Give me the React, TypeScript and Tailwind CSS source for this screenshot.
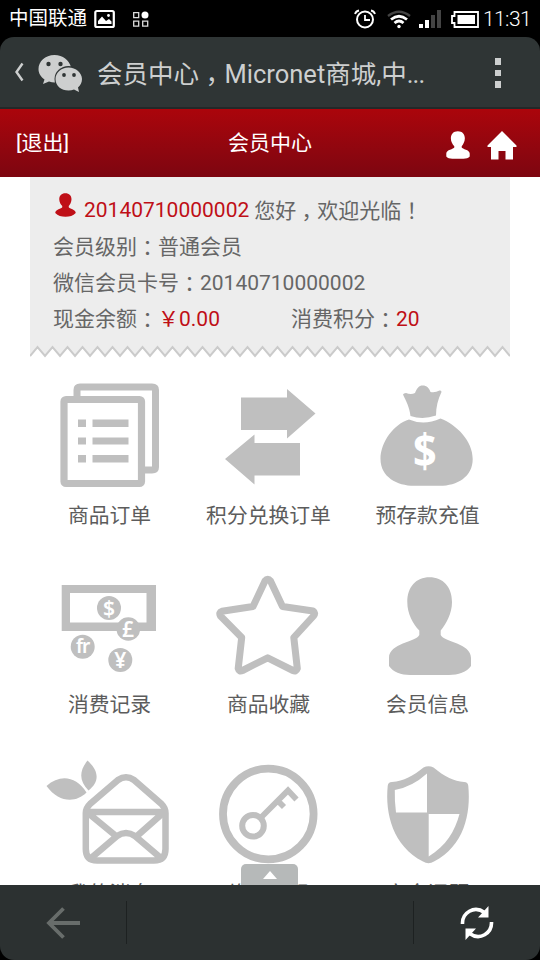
import type { ReactNode } from "react";

const menu: { label: string; viewBox: string; icon: ReactNode }[] = [
  {
    label: "商品订单",
    viewBox: "30 370 159 130",
    icon: (
      <>
        <path d="M77 397V390Q77 387 80 387H152Q155.500 387 155.500 390V467Q155.500 470 152 470H145" fill="none" stroke="#bfbfbf" strokeWidth="7" />
        <rect x="64" y="399.500" width="77.500" height="84" rx="2" fill="#fff" stroke="#bfbfbf" strokeWidth="7.200" />
        <path d="M78 419.500h8v7.500h-8zM78 437.500h8v7h-8zM78 455h8v7.500h-8zM92.500 419.500h36v7.500h-36zM92.500 437.500h36v7h-36zM92.500 455h36v7.500h-36z" />
      </>
    ),
  },
  {
    label: "积分兑换订单",
    viewBox: "189 370 159 130",
    icon: <path d="M241 397.500H287V389L315.500 413.500 287 438.500V430H241zM300 443V475.500H254.500V484.500L225 459 254.500 434.500V443z" />,
  },
  {
    label: "预存款充值",
    viewBox: "348 370 159 130",
    icon: (
      <>
        <path d="M410.500 416C409.500 407 406 401 403 394.500Q403.500 393 406 393Q411 395 415 393C417 388 419 385.500 422.500 385.500C427 385.500 429 388 430.500 392Q435 393 439.500 390.500Q441.500 390 441.500 392C438 399 436 407 436 415.500Q423 420 410.500 416z" />
        <path d="M409 419.500Q424 426 440.500 418.500C457 425 472.700 441 472.700 459C472.700 477 457 485.800 440 485.800H414C397 485.800 380.500 477 380.500 459C380.500 442 394 424 409 419.500z" />
        <text transform="translate(424.800 467.500) scale(0.900 1)" textAnchor="middle" fill="#fff" className="font-['Noto_Sans'] text-[46px] font-bold">$</text>
      </>
    ),
  },
  {
    label: "消费记录",
    viewBox: "30 559 159 130",
    icon: (
      <>
        <path fillRule="evenodd" d="M61.700 585H156V631H61.700zM70 593V622.500H146.500V593z" />
        <circle cx="109" cy="608" r="12" />
        <circle cx="128.300" cy="629" r="11.800" />
        <circle cx="82.700" cy="646.700" r="12" />
        <circle cx="120.300" cy="660" r="12" />
        <g fill="#fff" textAnchor="middle" className="font-['Noto_Sans'] text-[21px] font-semibold">
          <text x="109" y="615.500">$</text>
          <text x="128" y="636.500">£</text>
          <text x="82.700" y="653" className="text-[19px] tracking-[-1px]">fr</text>
          <text x="120.300" y="667.500">¥</text>
        </g>
      </>
    ),
  },
  {
    label: "商品收藏",
    viewBox: "189 559 159 130",
    icon: (
      <path
        d="M265 581Q267.700 577.500 270.500 581L282.500 606.500 313 611Q316 613 313.500 616L293.800 637.500 297.300 668.500Q296 672 293 670.500L267.700 657.800 242.500 670.500Q239 672 238.200 668.500L241.700 637.500 220.500 616Q218.500 612.500 222 611.300L253 606.500z"
        fill="none"
        stroke="#bfbfbf"
        strokeWidth="7"
        strokeLinejoin="round"
      />
    ),
  },
  {
    label: "会员信息",
    viewBox: "348 559 159 130",
    icon: (
      <path d="M429.500 577.300C443 577.300 452 587 452 602C452 614 446 624 440.700 630.500V635C444 642 471 643 471 658V666C467 672 458 675 449 675H410C401 675 393 672 389 666V658C389 643 416 642 419.300 635V630.500C413 624 407.300 614 407.300 602C407.300 587 416 577.300 429.500 577.300z" />
    ),
  },
  {
    label: "我的消息",
    viewBox: "30 748 159 130",
    icon: (
      <>
        <path d="M46.500 786C60 774 76 776 86.500 792.500C76 803 59 803 46.500 786zM87.500 760.500C100 772 99 782 88.500 790.500C79 781 79 771 87.500 760.500z" />
        <g fill="none" stroke="#bfbfbf" strokeWidth="6.500" strokeLinejoin="round">
          <path d="M85.800 813Q85.800 808 90 804L118 780Q126 774.500 134 780L161.500 804Q165.500 808 165.500 813V849Q165.500 860.500 154 860.500H97Q85.800 860.500 85.800 849z" />
          <path d="M86 812H165M88 813L116 836M163 813L137 836M90 859L117 836Q126 830 135 836L162 859" />
        </g>
      </>
    ),
  },
  {
    label: "修改密码",
    viewBox: "189 748 159 130",
    icon: (
      <g fill="none" stroke="#bfbfbf">
        <circle cx="268.300" cy="814" r="45.300" strokeWidth="7.800" />
        <circle cx="253" cy="825.700" r="10.800" strokeWidth="6" />
        <path d="M261 817.500L288 790.500 296.500 799.500M277.500 800.500L284 807" strokeWidth="5.800" />
      </g>
    ),
  },
  {
    label: "安全问题",
    viewBox: "348 748 159 130",
    icon: (
      <>
        <path d="M423.500 767.500Q428.500 765 433.500 767.500C445 777 454 781 464 782Q468 782 468.300 786C471 814 464 846 434 861.500Q428.500 865 423 861.500C393 846 385 814 387.700 786Q388 782 392 782C404 781 413 776 423.500 767.500z" />
        <path d="M427 773.500V812.500H396Q394.500 801 394.800 790Q412 787 427 773.500zM428.700 814H459.500C455 831 446 846 428.700 856.500z" fill="#fff" />
      </>
    ),
  },
];

// torn lower edge of the card, one tooth every 15px
const zigzag = Array.from({ length: 32 }, (_, i) => `L${7.5 + i * 15} 2 L${15 + i * 15} 11`).join(" ");

// half-width form padded on both sides, so the mark sits mid-cell
const Mark = ({ children }: { children: string }) => (
  <span className="px-[0.25em] font-['Noto_Sans_CJK_SC',sans-serif] [font-feature-settings:'halt']">{children}</span>
);

const StatusBar = () => (
  <div className="flex h-[37px] items-center bg-black px-[9px] text-white">
    <span className="pt-px text-[19.500px] leading-none">中国联通</span>
    <svg width="22" height="20" viewBox="0 0 22 20" className="ml-[7px]">
      <rect x="1.300" y="2" width="18.500" height="16" rx="1.500" fill="none" stroke="#fff" strokeWidth="2.200" />
      <path d="M4 15V12L8 7.500 12 12 15 10 17.500 12.500V15z" fill="#fff" />
      <circle cx="14.500" cy="6.500" r="1.400" fill="#fff" />
    </svg>
    <svg width="18" height="18" viewBox="0 0 18 18" className="ml-[16px]">
      <path d="M1.700 2.700h5v5h-5zM1.700 11.200h5v5h-5zM10.700 11.200h5v5h-5z" fill="none" stroke="#ddd" strokeWidth="1.300" />
      <circle cx="13" cy="5" r="3.500" fill="#fff" />
    </svg>
    <div className="ml-auto flex items-center pt-px">
      <svg width="22" height="20" viewBox="0 0 22 20" fill="none" stroke="#fff">
        <circle cx="11" cy="10.500" r="8" strokeWidth="2" />
        <path d="M11 6V11H16M1 5Q2 2 5 1.500M21 5Q20 2 17 1.500" strokeWidth="1.800" />
      </svg>
      <svg width="24" height="19" viewBox="0 0 24 19" fill="none" className="ml-[11px]">
        <path d="M1 6Q12 -2.500 23 6" stroke="#444" strokeWidth="2.300" />
        <path d="M4 9.500Q12 3 20 9.500M7.500 13Q12 9 16.500 13" stroke="#fff" strokeWidth="2.800" />
        <circle cx="12" cy="16.500" r="1.700" fill="#fff" />
      </svg>
      <svg width="22" height="18" viewBox="0 0 22 18" className="ml-[8px]">
        <path d="M0 14h4v4H0zM6 10h4v8H6z" fill="#fff" />
        <path d="M12 5h4v13h-4zM18 0h4v18h-4z" fill="#444" />
      </svg>
      <svg width="28" height="17" viewBox="0 0 28 17" className="ml-[10px]">
        <path d="M3.500 1H27V16H3.500V12H1V5H3.500z" fill="none" stroke="#fff" strokeWidth="1.800" />
        <path d="M6.500 4H24V13H6.500z" fill="#fff" />
      </svg>
      <span className="ml-[4px] pt-px font-['Roboto'] text-[21px] font-light leading-none tracking-[-0.600px]">11:31</span>
    </div>
  </div>
);

const TitleBar = () => (
  <div className="flex h-[72px] items-center rounded-t-[14px] border-b-2 border-[#232828] bg-[#2f3535] pl-[14px] text-[#cdcfcf]">
    <svg width="11" height="20" viewBox="0 0 11 20">
      <path d="M8.500 1.500L2.500 10 8.500 18.500" fill="none" stroke="#cdcfcf" strokeWidth="2.400" />
    </svg>
    <svg width="46" height="40" viewBox="37 53 46 40" className="ml-[12px] mt-0.5" fill="#cdcfcf">
      <path d="M54.500 55C45 55 38.500 61.500 38.500 69C38.500 73.500 41 77 44.500 79.500L43 84L49 81.500Q54 83 58 82Q62 70 71 67C69 60 63 55 54.500 55z" />
      <ellipse cx="68.500" cy="79" rx="14" ry="13" fill="#2f3535" />
      <path d="M68.500 67.500C61 67.500 55.500 73 55.500 79C55.500 86 61.500 90.500 68.500 90.500Q71.500 90.500 74 89.500L79 92L78 87.500C80.500 85.500 82 82.500 82 79C82 73 76 67.500 68.500 67.500z" />
      <g fill="#2f3535">
        <circle cx="48.500" cy="64" r="2.200" />
        <circle cx="60.500" cy="64" r="2.200" />
        <circle cx="64" cy="75" r="1.900" />
        <circle cx="74" cy="75" r="1.900" />
      </g>
    </svg>
    <h1 className="ml-[14px] whitespace-nowrap pt-[2px] text-[25.500px] leading-none">
      会员中心<Mark>，</Mark>Micronet商城,中<span className="tracking-[-0.900px]">...</span>
    </h1>
    <div className="ml-auto mr-[39px] flex flex-col gap-[5px] pt-0.5">
      <span className="size-[6.500px] bg-[#cdcfcf]" />
      <span className="size-[6.500px] bg-[#cdcfcf]" />
      <span className="size-[6.500px] bg-[#cdcfcf]" />
    </div>
  </div>
);

const MemberHeader = () => (
  <header className="grid h-[68px] grid-cols-3 items-center bg-linear-to-b from-[#ab050b] to-[#7d0610] text-[21px] text-white">
    <span className="pl-4 pt-0.5">[退出]</span>
    <span className="pt-0.5 text-center">会员中心</span>
    <div className="flex items-center justify-end gap-[17px] pr-[23px] pt-1">
      <svg width="24" height="28" viewBox="388 576 84 100" preserveAspectRatio="none" fill="#fff">
        <path d="M429.500 577C445 577 454 587 454 602C454 614 448 624 443 630.500V635C445 641 471 643 471 656V667C467 672 458 675 449 675H410C401 675 393 672 389 667V656C389 643 415 641 417 635V630.500C411 624 405 614 405 602C405 587 414 577 429.500 577z" />
      </svg>
      <svg width="30" height="29" viewBox="0 0 30 29" fill="#fff">
        <path d="M15 0L29.500 14.500V16H26V28.500H18.500V20H11.500V28.500H4V16H.5V14.500z" />
      </svg>
    </div>
  </header>
);

const MemberCard = () => (
  <section className="mx-[30px]">
    <div className="h-[168px] bg-[#ededed] pl-[23px] pt-[14px] text-[21px] leading-[36px] text-[#666]">
      <p className="flex h-9 whitespace-nowrap">
        <svg width="21" height="24" viewBox="388 576 84 100" preserveAspectRatio="none" fill="#bf0f17" className="ml-[2px] mr-[8px] mt-0.5">
          <path d="M429.500 577C445 577 454 587 454 602C454 614 448 624 443 630.500V635C445 641 471 643 471 659Q455 675 430 675Q405 675 389 659C389 643 415 641 417 635V630.500C411 624 405 614 405 602C405 587 414 577 429.500 577z" />
        </svg>
        <span className="mr-[5px] pt-px text-[#bf0f17]">20140710000002</span>
        <span>您好<Mark>，</Mark>欢迎光临<Mark>！</Mark></span>
      </p>
      <p className="h-9">会员级别<Mark>：</Mark>普通会员</p>
      <p className="h-9">微信会员卡号<Mark>：</Mark>20140710000002</p>
      <div className="flex h-9">
        <p className="w-[238px]">现金余额<Mark>：</Mark><span className="text-[#bf0f17]">￥0.00</span></p>
        <p>消费积分<Mark>：</Mark><span className="text-[#bf0f17]">20</span></p>
      </div>
    </div>
    <svg width="480" height="13" viewBox="0 0 480 13" className="block">
      <path d={`M0 0 L0 11 ${zigzag} L480 0 Z`} fill="#ededed" />
      <path d={`M0 11 ${zigzag}`} fill="none" stroke="#cbcbcb" strokeWidth="2" />
    </svg>
  </section>
);

export default function App() {
  return (
    <div className="flex h-[960px] w-[540px] flex-col overflow-hidden bg-black font-['Roboto','Noto_Sans_CJK_SC',sans-serif]">
      <StatusBar />
      <TitleBar />
      <MemberHeader />

      <main className="relative h-[708px] shrink-0 overflow-hidden bg-white">
        <MemberCard />
        <div className="ml-[30px] mt-[12px] grid w-[477px] grid-cols-3">
          {menu.map((item) => (
            <a key={item.label} className="flex h-[189px] flex-col items-center">
              <svg width="159" height="130" viewBox={item.viewBox} fill="#bfbfbf" className="shrink-0">
                {item.icon}
              </svg>
              <span className="whitespace-nowrap pt-px text-[20.800px] leading-[30px] text-[#5c5c5c]">{item.label}</span>
            </a>
          ))}
        </div>

        <button className="absolute bottom-0 left-[241px] flex h-[21px] w-[57px] justify-center rounded-t-[5px] bg-[#b6b9b9] pt-[7px]">
          <svg width="14" height="8" viewBox="0 0 14 8">
            <path d="M7 0L14 8H0z" fill="#fff" />
          </svg>
        </button>
      </main>

      <nav className="flex h-[75px] shrink-0 items-center rounded-b-[14px] bg-[#2c3131]">
        <div className="flex h-[43px] w-[127px] items-center justify-center border-r border-[#1d2121]">
          <svg width="34" height="32" viewBox="0 0 34 32" fill="none" stroke="#686d6b" strokeWidth="3.800">
            <path d="M34 16H3M17.500 1.500L3 16 17.500 30.500" />
          </svg>
        </div>
        <div className="h-[43px] w-[287px] border-r border-[#1d2121]" />
        <div className="flex flex-1 justify-center">
          <svg width="34" height="36" viewBox="0 0 34 36" fill="none">
            <path d="M2.500 19C2 8 14 0 24.500 7.500M31.500 17C32 28 20 36 9.500 28.500" stroke="#fff" strokeWidth="3.600" />
            <path d="M28.500 1V12.500H18zM5.500 35V23.500H16z" fill="#fff" />
          </svg>
        </div>
      </nav>
    </div>
  );
}
